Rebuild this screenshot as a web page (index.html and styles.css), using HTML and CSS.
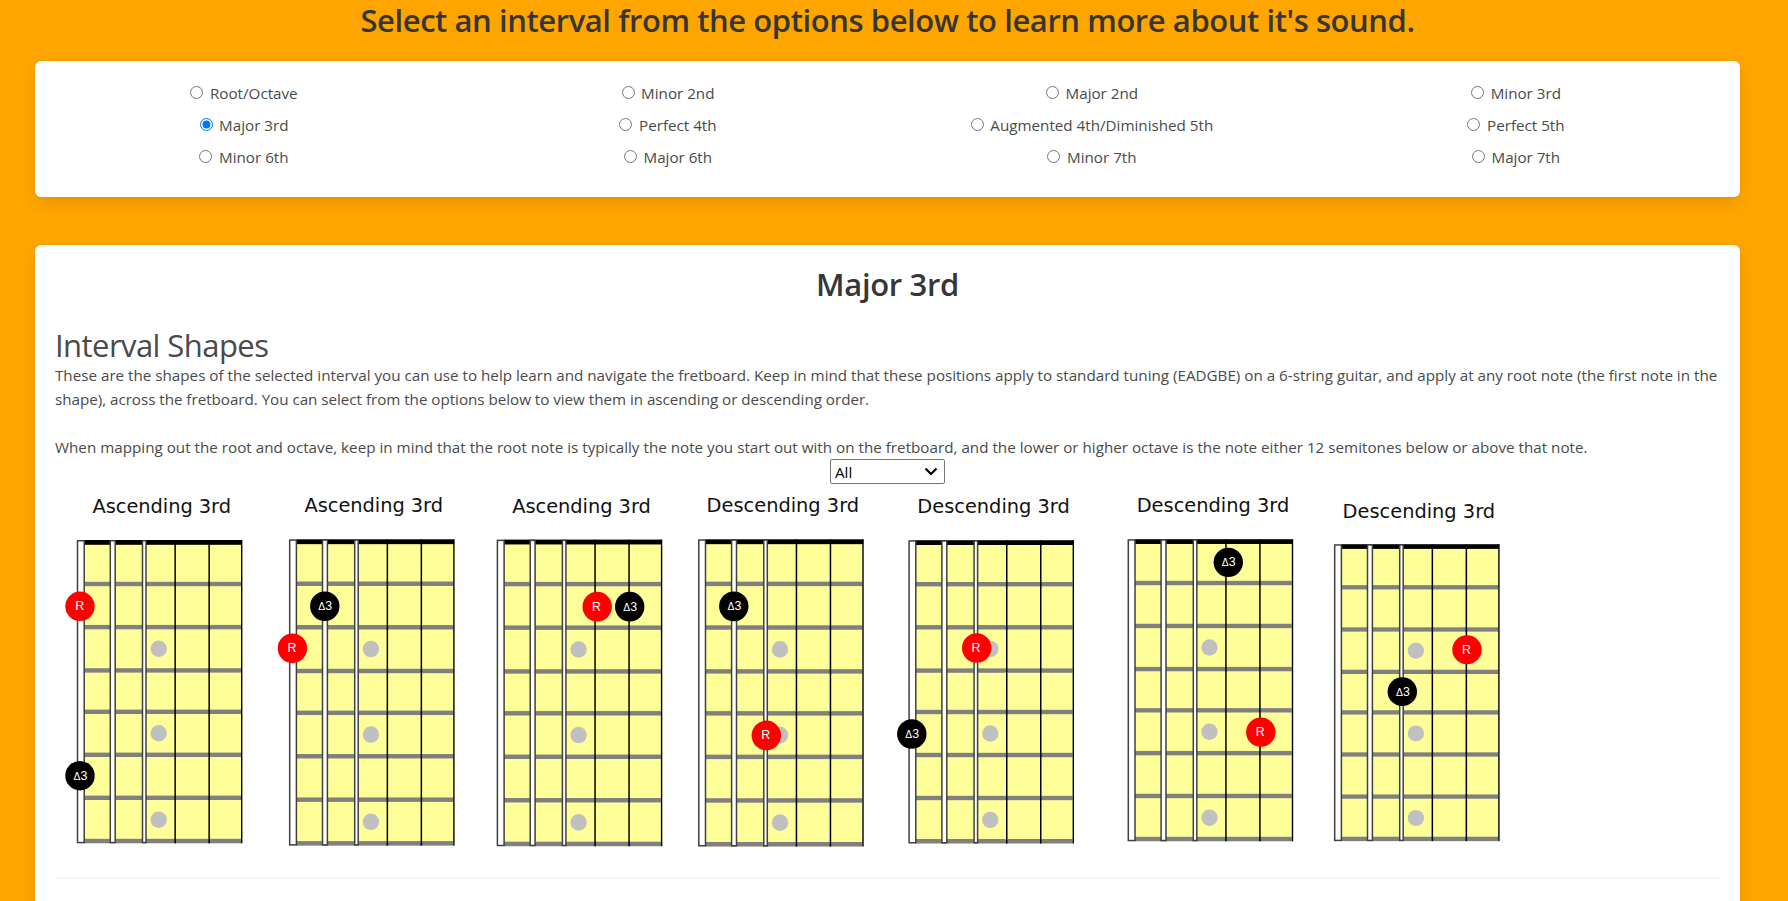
FILE: index.html
```html
<!DOCTYPE html>
<html lang="en">
<head>
<meta charset="utf-8">
<title>Intervals</title>
<link rel="stylesheet" href="styles.css">
</head>
<body>
<svg class="defs" width="0" height="0" aria-hidden="true">
  <defs>
    <g id="board">
      <rect x="7" y="2" width="157" height="301" fill="#ffff99"/>
      <g fill="#808080">
        <rect x="7" y="41.8" width="157" height="4.4"/>
        <rect x="7" y="84.9" width="157" height="4.4"/>
        <rect x="7" y="128.2" width="157" height="4.4"/>
        <rect x="7" y="169.6" width="157" height="4.4"/>
        <rect x="7" y="212.6" width="157" height="4.4"/>
        <rect x="7" y="255.6" width="157" height="4.4"/>
        <rect x="7" y="298.8" width="157" height="4.5"/>
      </g>
      <rect x="7" y="0" width="158" height="4.8" fill="#000"/>
      <g fill="#fff" stroke="#404040" stroke-width="1.5">
        <rect x="0.5" y="0.75" width="6.7" height="301.8"/>
        <rect x="33.3" y="0.75" width="4.9" height="301.8"/>
        <rect x="65.5" y="0.75" width="3.5" height="301.8"/>
      </g>
      <g fill="#000">
        <rect x="97.4" y="0" width="1.5" height="303.3"/>
        <rect x="131.4" y="0" width="1.5" height="303.3"/>
        <rect x="164" y="0" width="1.4" height="303.3"/>
      </g>
      <g fill="#c0c0c0">
        <circle cx="81.7" cy="108.7" r="8.2"/>
        <circle cx="81.7" cy="193.3" r="8.2"/>
        <circle cx="81.7" cy="279.7" r="8.2"/>
      </g>
    </g>
    <circle id="dot" r="14.7"/>
  </defs>
</svg>
<main class="page">
  <div class="box intro"></div>
  <h1 class="title prompt">Select an interval from the options below to learn more about it's sound.</h1>
  <form class="box options">
    <label class="radio"><input type="radio" name="interval"><span>Root/Octave</span></label>
    <label class="radio"><input type="radio" name="interval"><span>Minor 2nd</span></label>
    <label class="radio"><input type="radio" name="interval"><span>Major 2nd</span></label>
    <label class="radio"><input type="radio" name="interval"><span>Minor 3rd</span></label>
    <label class="radio"><input type="radio" name="interval" checked><span>Major 3rd</span></label>
    <label class="radio"><input type="radio" name="interval"><span>Perfect 4th</span></label>
    <label class="radio"><input type="radio" name="interval"><span>Augmented 4th/Diminished 5th</span></label>
    <label class="radio"><input type="radio" name="interval"><span>Perfect 5th</span></label>
    <label class="radio"><input type="radio" name="interval"><span>Minor 6th</span></label>
    <label class="radio"><input type="radio" name="interval"><span>Major 6th</span></label>
    <label class="radio"><input type="radio" name="interval"><span>Minor 7th</span></label>
    <label class="radio"><input type="radio" name="interval"><span>Major 7th</span></label>
  </form>
  <section class="box detail">
    <h2 class="title name">Major 3rd</h2>
    <h3 class="subtitle">Interval Shapes</h3>
    <p class="copy">These are the shapes of the selected interval you can use to help learn and navigate the fretboard. Keep in mind that these positions apply to standard tuning (EADGBE) on a 6-string guitar, and apply at any root note (the first note in the<br><span class="tight">shape), across the fretboard. You can select from the options below to view them in ascending or descending order.</span></p>
    <p class="copy">When mapping out the root and octave, keep in mind that the root note is typically the note you start out with on the fretboard, and the lower or higher octave is the note either 12 semitones below or above that note.</p>
    <div class="picker">
      <div class="control">
        <select class="order"><option>All</option><option>Ascending</option><option>Descending</option></select>
        <svg class="chevron" width="14" height="9" viewBox="0 0 14 9"><path d="M1.5 1.5 7 7 12.5 1.5" fill="none" stroke="#000" stroke-width="2.2"/></svg>
      </div>
    </div>
    <div class="shapes">
      <svg width="212" height="380" viewBox="-22 0 212 380">
        <text class="caption" x="15.5" y="28.7" textLength="138.5">Ascending 3rd</text>
        <g transform="translate(0 56)">
          <use href="#board"/>
          <use href="#dot" x="3" y="66.3" fill="#f00"/><text class="note" x="2.6" y="70.3">R</text>
          <use href="#dot" x="3" y="235.7"/><text class="note" x="3.4" y="239.7"><tspan class="delta">Δ</tspan>3</text>
        </g>
      </svg>
      <svg width="208" height="380" viewBox="-22 0 208 380">
        <text class="caption" x="15.5" y="28" textLength="138.5">Ascending 3rd</text>
        <g transform="translate(.2 55.3) scale(1 1.01)">
          <use href="#board"/>
          <use href="#dot" x="35.6" y="66.3"/><text class="note" x="36" y="70.3"><tspan class="delta">Δ</tspan>3</text>
          <use href="#dot" x="3.2" y="107.9" fill="#f00"/><text class="note" x="2.8" y="111.9">R</text>
        </g>
      </svg>
      <svg width="201" height="380" viewBox="-22 0 201 380">
        <text class="caption" x="15.3" y="28.5" textLength="138.5">Ascending 3rd</text>
        <g transform="translate(-.1 55.6) scale(1 1.011)">
          <use href="#board"/>
          <use href="#dot" x="100.3" y="66.4" fill="#f00"/><text class="note" x="99.7" y="70.4">R</text>
          <use href="#dot" x="132.8" y="66.4"/><text class="note" x="133.4" y="70.4"><tspan class="delta">Δ</tspan>3</text>
        </g>
      </svg>
      <svg width="210" height="380" viewBox="-22 0 210 380">
        <text class="caption" x="8.6" y="28" textLength="152.5">Descending 3rd</text>
        <g transform="translate(.3 55.3) scale(1 1.013)">
          <use href="#board"/>
          <use href="#dot" x="35.5" y="66.2"/><text class="note" x="36.1" y="70.2"><tspan class="delta">Δ</tspan>3</text>
          <use href="#dot" x="68" y="193.6" fill="#f00"/><text class="note" x="67.4" y="197.6">R</text>
        </g>
      </svg>
      <svg width="219" height="380" viewBox="-22 0 219 380">
        <text class="caption" x="9.3" y="29.3" textLength="152.5">Descending 3rd</text>
        <g transform="translate(.6 56.2)">
          <use href="#board"/>
          <use href="#dot" x="68.1" y="107.8" fill="#f00"/><text class="note" x="67.5" y="111.8">R</text>
          <use href="#dot" x="3.2" y="193.8"/><text class="note" x="3.6" y="197.8"><tspan class="delta">Δ</tspan>3</text>
        </g>
      </svg>
      <svg width="207" height="380" viewBox="-22 0 207 380">
        <text class="caption" x="9.7" y="28.2" textLength="152.5">Descending 3rd</text>
        <g transform="translate(.8 55.2) scale(1 .996)">
          <use href="#board"/>
          <use href="#dot" x="100.5" y="23.2"/><text class="note" x="100.9" y="27.2"><tspan class="delta">Δ</tspan>3</text>
          <use href="#dot" x="133" y="193.8" fill="#f00"/><text class="note" x="132.4" y="197.8">R</text>
        </g>
      </svg>
      <svg width="207" height="380" viewBox="-22 0 207 380">
        <text class="caption" x="8.6" y="33.7" textLength="152.5">Descending 3rd</text>
        <g transform="translate(.2 60.2) scale(1 .979)">
          <use href="#board"/>
          <use href="#dot" x="132.8" y="107.8" fill="#f00"/><text class="note" x="132.2" y="111.8">R</text>
          <use href="#dot" x="68.1" y="150.6"/><text class="note" x="68.7" y="154.6"><tspan class="delta">Δ</tspan>3</text>
        </g>
      </svg>
    </div>
    <hr class="rule">
  </section>
</main>
</body>
</html>
```
FILE: styles.css
```css
body {
  margin: 0;
  background: #ffa500;
  color: #4a4a4a;
  font: 15.2px/24px "Open Sans", "Noto Sans", sans-serif;
}

.defs {
  display: block;
}

.page {
  box-sizing: border-box;
  height: 901px;
  padding: 0 48px 0 35px;
  overflow: hidden;
}

.box {
  box-sizing: border-box;
  background: #fff;
  border-radius: 6px;
  box-shadow: 0 8px 16px -2px rgba(10, 10, 10, 0.1), 0 0 0 1px rgba(10, 10, 10, 0.02);
}

.intro {
  height: 40px;
  margin-top: -60px;
  margin-bottom: 22px;
}

.title {
  margin: 0;
  color: #363636;
  font-size: 31px;
  font-weight: 600;
  line-height: 36px;
  text-align: center;
}

.prompt {
  margin-bottom: 23px;
  letter-spacing: -0.43px;
}

.options {
  display: grid;
  grid-template-columns: repeat(4, 378px);
  align-content: start;
  gap: 8px 46px;
  height: 136px;
  margin-bottom: 48px;
  padding: 20px;
}

.radio {
  display: flex;
  align-items: center;
  justify-content: center;
  height: 24px;
}

.radio input {
  flex: none;
  width: 13px;
  height: 13px;
  margin: 0 6.6px 1px 0;
}

.detail {
  height: 760px;
  padding: 21px 20px;
}

.name {
  margin-bottom: 25px;
  letter-spacing: -0.35px;
}

.subtitle {
  margin: 0;
  font-size: 31px;
  font-weight: 400;
  line-height: 36px;
  letter-spacing: -0.56px;
}

.copy {
  margin: 0 0 24px;
  white-space: nowrap;
  letter-spacing: 0.004px;
}

.copy + .copy {
  margin-bottom: 0;
  letter-spacing: 0.012px;
}

.tight {
  letter-spacing: -0.025px;
}

.picker {
  display: flex;
  justify-content: center;
}

.control {
  position: relative;
  display: flex;
}

.order {
  box-sizing: border-box;
  width: 115px;
  height: 25px;
  padding: 0 4px;
  border: 1px solid #767676;
  border-radius: 2px;
  background: #fff;
  color: #000;
  font: 15.2px "Open Sans", sans-serif;
  appearance: none;
}

.chevron {
  position: absolute;
  top: 8px;
  right: 7.5px;
  pointer-events: none;
}

.shapes {
  display: flex;
}

.shapes svg {
  display: block;
  flex: none;
}

.caption {
  font: 19.4px "DejaVu Sans", sans-serif;
  fill: #111;
}

.note {
  font: 12.4px "Liberation Sans", sans-serif;
  fill: #fff;
  text-anchor: middle;
}

.delta {
  font-size: 10.4px;
}

.rule {
  height: 2px;
  margin: 13px 0 0;
  border: 0;
  background: #f5f5f5;
}
```
